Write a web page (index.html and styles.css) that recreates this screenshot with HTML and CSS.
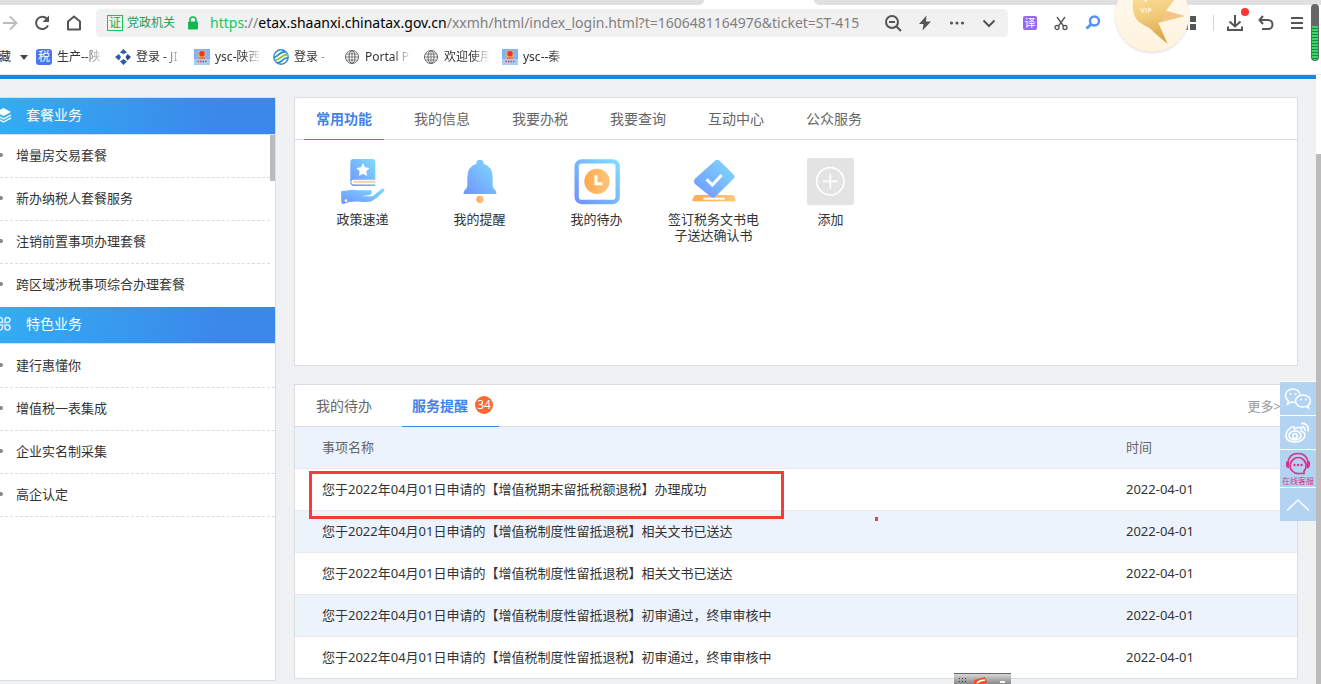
FILE: index.html
```html
<!DOCTYPE html>
<html lang="zh-CN">
<head>
<meta charset="utf-8">
<title>国家税务总局陕西省电子税务局</title>
<link rel="stylesheet" href="styles.css">
</head>
<body>
<svg class="defs" width="0" height="0" aria-hidden="true">
  <defs>
    <linearGradient id="blue" x1="0" y1="1" x2="1" y2="0"><stop offset="0" stop-color="#6f94ff"/><stop offset="1" stop-color="#80dcff"/></linearGradient>
    <linearGradient id="orange" x1="0" y1="0" x2="1" y2="0"><stop offset="0" stop-color="#ffa94d"/><stop offset="1" stop-color="#ffc67a"/></linearGradient>
    <linearGradient id="gold" gradientUnits="userSpaceOnUse" x1="90" y1="0" x2="120" y2="132"><stop offset="0" stop-color="#f8d98f"/><stop offset=".4" stop-color="#f0c978"/><stop offset="1" stop-color="#d5a045"/></linearGradient>
    <linearGradient id="cream" x1="0" y1="0" x2="0" y2="1"><stop offset="0" stop-color="#fffaf0"/><stop offset="1" stop-color="#fff3de"/></linearGradient>
    <symbol id="globe" viewBox="0 0 16 16"><g fill="none" stroke="#666"><circle cx="8" cy="8" r="6.500"/><ellipse cx="8" cy="8" rx="3" ry="6.500"/><path d="M8 1.500v13M1.500 8h13M2.500 5h11M2.500 11h11" stroke-width=".8"/></g></symbol>
    <symbol id="emblem" viewBox="0 0 16 16"><path fill="#84b2f4" d="M0 0h16v16H0z"/><path fill="#a9cbf8" d="M0 10h16v6H0z"/><path d="M4 9.500L8 .8l4 8.700z" fill="#f0b45c"/><circle cx="8" cy="5.500" r="4" fill="#f0b45c"/><circle cx="8" cy="4.800" r="2.800" fill="#e33a2c"/><path d="M5 9h6" stroke="#d8483c"/><path d="M3.500 12.500h9" stroke="#d8483c" stroke-width="1.300" stroke-dasharray="1.500 1"/></symbol>
  </defs>
</svg>

<header class="browser">
  <div class="tabstrip"><span class="strip-left"></span><span class="strip-right"></span></div>
  <div class="toolbar">
    <div class="nav">
      <button aria-label="前进"><svg width="20" height="20" viewBox="0 0 20 20"><path d="M3 10h13M10 3.500l6.500 6.500-6.500 6.500" fill="none" stroke="#bbb" stroke-width="1.800"/></svg></button>
      <button aria-label="刷新"><svg width="20" height="20" viewBox="0 0 20 20"><path d="M15 5.800A6.200 6.200 0 1 0 16 12.300" fill="none" stroke="#555" stroke-width="2"/><path d="M17 2.500v6.500h-6.500z" fill="#555"/></svg></button>
      <button aria-label="主页"><svg width="20" height="20" viewBox="0 0 20 20"><path d="M4 16.500V8.500L10 3.500l6 5v8z" fill="none" stroke="#555" stroke-width="2" stroke-linejoin="round"/></svg></button>
    </div>
    <div class="address">
      <span class="cert">证</span>
      <span class="org">党政机关</span>
      <svg class="lock" width="12" height="14" viewBox="0 0 12 14"><path d="M3 6V4a3 3 0 0 1 6 0v2" fill="none" stroke="#11b74f" stroke-width="1.600"/><rect x="1" y="5.500" width="10" height="8" rx="1" fill="#11b74f"/></svg>
      <div class="url" role="textbox" aria-label="地址"><span class="scheme">https</span>://<span class="host">etax.shaanxi.chinatax.gov.cn</span>/xxmh/html/index_login.html?t=1606481164976&amp;ticket=ST-415</div>
      <div class="tools">
        <button aria-label="缩小"><svg width="18" height="18" viewBox="0 0 18 18"><circle cx="8" cy="8" r="6" fill="none" stroke="#555" stroke-width="2"/><path d="M5 8h6M12.500 12.500L17 17" stroke="#555" stroke-width="2"/></svg></button>
        <button aria-label="极速模式"><svg width="18" height="18" viewBox="0 0 18 18"><path d="M10.500 1.500L3 10h4.500L6.500 16.500 15 7.500h-5z" fill="#555"/></svg></button>
        <button aria-label="更多"><svg width="18" height="18" viewBox="0 0 18 18"><g fill="#555"><circle cx="3.500" cy="9" r="1.600"/><circle cx="9" cy="9" r="1.600"/><circle cx="14.500" cy="9" r="1.600"/></g></svg></button>
        <button aria-label="展开"><svg width="18" height="18" viewBox="0 0 18 18"><path d="M3.500 6.500L9 12l5.500-5.500" fill="none" stroke="#555" stroke-width="2"/></svg></button>
      </div>
    </div>
    <div class="extensions">
      <button class="translate" aria-label="翻译">译</button>
      <button aria-label="截图"><svg width="16" height="16" viewBox="0 0 16 16"><g fill="none" stroke="#555" stroke-width="1.300"><path d="M4 2l6.500 9M12 2L5.500 11"/><circle cx="4" cy="12.500" r="2"/><circle cx="12" cy="12.500" r="2"/></g></svg></button>
      <button aria-label="搜索"><svg width="16" height="16" viewBox="0 0 16 16"><circle cx="9.500" cy="6" r="4.500" fill="none" stroke="#5590fa" stroke-width="2.400"/><path d="M6 9.500L1.500 13.500" stroke="#5590fa" stroke-width="3"/></svg></button>
      <button class="vip" aria-label="VIP"><svg width="74" height="52" viewBox="0 0 222 156"><circle cx="111" cy="45" r="111" fill="url(#cream)"/><path d="M54-4Q50 40 65 58C80 78 100 76 118 98L158 132L130 68L207 48L153 32L180-4H98L94 6 76-4Z" fill="url(#gold)"/><path d="M130 68L207 48 153 32C150 50 140 60 130 68Z" fill="#f6c583"/><text x="75" y="38">VIP</text></svg></button>
      <button class="apps" aria-label="应用"><svg width="14" height="14" viewBox="0 0 14 14"><path fill="#555" d="M0 0h5v6H0zM7 0h6v6H7zM0 8h5v6H0zM7 8h6v6H7z"/></svg></button>
      <span class="divider"></span>
      <button class="download" aria-label="下载"><svg width="18" height="18" viewBox="0 0 18 18"><path d="M9 1v11M3.500 7.500L9 12.500l5.500-5M2 12.500V16h14v-3.500" fill="none" stroke="#555" stroke-width="2"/></svg><i class="dot"></i></button>
      <button class="undo" aria-label="撤销"><svg width="16" height="16" viewBox="0 0 16 16"><path d="M5 1L1.500 5 5 9M2 5h8a4.500 4.500 0 0 1 0 9H4" fill="none" stroke="#555" stroke-width="2"/></svg></button>
      <button class="menu" aria-label="菜单"><svg width="14" height="14" viewBox="0 0 14 14"><path d="M1 2h12M1 7h12M1 12h12" stroke="#555" stroke-width="2"/></svg></button>
    </div>
  </div>
  <nav class="bookmarks">
    <button class="fav">藏<i class="caret"></i></button>
    <a href="#"><b class="tax">税</b><span>生产--陕</span></a>
    <a href="#"><svg width="16" height="16" viewBox="0 0 16 16"><g fill="#2d5fa8"><path d="M5 3.500L8.500 0 12 3.500 8.500 5zM5 12.500l3.500 3.500 3.500-3.500L8.500 10zM4 5l2 3-2 3.500L0 8z"/></g><path d="M12.500 5L16 8l-3.500 3.500L10.500 8z" fill="#244a86"/></svg><span>登录 - JI</span></a>
    <a href="#"><svg width="16" height="16"><use href="#emblem"/></svg><span>ysc-陕西</span></a>
    <a href="#" class="brief"><svg width="16" height="16" viewBox="0 0 16 16"><circle cx="8" cy="8" r="7.200" fill="#fff" stroke="#2f8bd0" stroke-width="1.400"/><g fill="none" stroke-width="1.800"><path d="M1 8C5 9 7 1 13 3" stroke="#2f8bd0"/><path d="M2 11C7 12 9 4 15 6" stroke="#8cc63f"/><path d="M4 14C9 14 10 8 15 9" stroke="#2f8bd0"/></g></svg><span>登录 -</span></a>
    <a href="#"><svg width="16" height="16"><use href="#globe"/></svg><span>Portal P</span></a>
    <a href="#"><svg width="16" height="16"><use href="#globe"/></svg><span>欢迎使用</span></a>
    <a href="#"><svg width="16" height="16"><use href="#emblem"/></svg><span>ysc--秦</span></a>
  </nav>
  <div class="meter"><span></span></div>
</header>

<div class="viewport">
<div class="page">
  <aside class="sidebar">
    <h2><svg width="16" height="16" viewBox="0 0 16 16"><path d="M7.500 1L15 5 7.500 9 0 5z" fill="#fff"/><path d="M0 8l7.500 4L15 8M0 11l7.500 4 7.500-4" fill="none" stroke="#dff0ff" stroke-width="1.500"/></svg>套餐业务</h2>
    <ul class="scroll">
      <li><a href="#">增量房交易套餐</a></li>
      <li><a href="#">新办纳税人套餐服务</a></li>
      <li><a href="#">注销前置事项办理套餐</a></li>
      <li><a href="#">跨区域涉税事项综合办理套餐</a></li>
    </ul>
    <h2><svg width="16" height="16" viewBox="0 0 16 16"><g fill="none" stroke="#d8eeff" stroke-width="1.500"><path d="M6.500 6.500H4a2.500 2.500 0 1 1 2.500-2.500zM9 6.500V4a2.500 2.500 0 1 1 2.500 2.500zM6.500 9v2.500a2.500 2.500 0 1 1-2.500-2.500zM9 9h2.500a2.500 2.500 0 1 1-2.500 2.500z"/></g></svg>特色业务</h2>
    <ul class="special">
      <li><a href="#">建行惠懂你</a></li>
      <li><a href="#">增值税一表集成</a></li>
      <li><a href="#">企业实名制采集</a></li>
      <li><a href="#">高企认定</a></li>
    </ul>
  </aside>

  <main>
    <section class="panel functions">
      <div class="tabs">
        <button class="active">常用功能</button><button>我的信息</button><button>我要办税</button><button>我要查询</button><button>互动中心</button><button>公众服务</button>
      </div>
      <div class="tiles">
        <a href="#"><svg width="48" height="48" viewBox="0 0 144 144"><path d="M44 6h57q8 0 8 8v56H44q-6 0-6 6t6 6h65v5H46q-12 0-12-12V16q0-10 10-10z" fill="url(#blue)"/><path d="M44 68h65v14H44q-7 0-7-7t7-7z" fill="#fff"/><path d="M46 71h63v7H46q-4 0-4-3.500t4-3.500z" fill="#ffd3a0"/><path d="M72 18l6 13 14 2-10 10 2 14-12-7-12 7 2-14-10-10 14-2z" fill="#fff"/><path d="M6 103l22-3q14-4 28 0h38q6 0 4 8l-3 5-28 5 34 0L128 95q10-3 8 6-18 20-38 32-10 3-24 2-20-3-42 0l-20 6q-5 0-5-7z" fill="url(#blue)"/><circle cx="21" cy="131" r="4" fill="#fff"/></svg><span>政策速递</span></a>
        <a href="#"><svg width="48" height="48" viewBox="0 0 144 144"><path d="M61 20q0-12 11-12t11 12q27 9 27 40v26q0 8 9 15 5 10-1 10H26q-6 0-1-10 9-7 9-15V60q0-31 27-40z" fill="url(#blue)"/><circle cx="72" cy="127" r="11" fill="url(#orange)"/></svg><span>我的提醒</span></a>
        <a href="#"><svg width="48" height="48" viewBox="0 0 144 144"><rect x="11" y="13" width="123" height="122" rx="15" fill="#fff" stroke="url(#blue)" stroke-width="13"/><circle cx="72" cy="73" r="38" fill="url(#orange)"/><path d="M69 55v25h19" fill="none" stroke="#fff" stroke-width="9"/></svg><span>我的待办</span></a>
        <a href="#"><svg width="48" height="48" viewBox="0 0 144 144"><path d="M18 114h108q5 0 7 6l4 9q0 4-5 4H11q-5 0-4-4l4-9q2-6 7-6z" fill="url(#orange)"/><path d="M40 125h64" stroke="#fff" stroke-width="6"/><path d="M75 11q7-6 14 0l41 41q7 7 0 14L76 119q-7 5-14 0L14 80q-5-7 0-14z" fill="url(#blue)"/><path d="M50 67l17 17 28-30" fill="none" stroke="#fff" stroke-width="9"/></svg><span>签订税务文书电子送达确认书</span></a>
        <a href="#"><svg width="48" height="48" viewBox="0 0 144 144"><rect x="0" y="3" width="141" height="141" rx="6" fill="#e3e3e3"/><g fill="none" stroke="#fff" stroke-width="5"><circle cx="70" cy="73" r="41"/><path d="M48 73h44M70 51v44"/></g></svg><span>添加</span></a>
      </div>
    </section>

    <section class="panel notices">
      <div class="tabs">
        <button>我的待办</button><button class="active counted">服务提醒<em>34</em></button>
        <a class="more" href="#">更多&gt;</a>
      </div>
      <table>
        <thead><tr><th>事项名称</th><th class="date">时间</th></tr></thead>
        <tbody>
          <tr><td>您于2022年04月01日申请的【增值税期末留抵税额退税】办理成功</td><td>2022-04-01</td></tr>
          <tr><td>您于2022年04月01日申请的【增值税制度性留抵退税】相关文书已送达</td><td>2022-04-01</td></tr>
          <tr><td>您于2022年04月01日申请的【增值税制度性留抵退税】相关文书已送达</td><td>2022-04-01</td></tr>
          <tr><td>您于2022年04月01日申请的【增值税制度性留抵退税】初审通过，终审审核中</td><td>2022-04-01</td></tr>
          <tr><td>您于2022年04月01日申请的【增值税制度性留抵退税】初审通过，终审审核中</td><td>2022-04-01</td></tr>
        </tbody>
      </table>
      <div class="highlight"></div>
      <div class="speck"></div>
    </section>
  </main>

  <div class="floating">
    <button aria-label="微信"><svg width="28" height="24" viewBox="0 0 28 24"><g fill="none" stroke="#fff" stroke-width="1.500"><path d="M16 7.500C15 3.500 12 2 9 2 4.500 2 1.500 5 1.500 8.500c0 2 1 4 3 5.500l-1 3 3.500-2q2 .6 4.500.4"/><path d="M19 8c-4 0-7.500 2.500-7.500 6s3.500 6 7.500 6q1.500 0 3-.6l2.500 1.600-.6-2.500c1.600-1.200 2.600-2.700 2.600-4.500 0-3.500-3.500-6-7.500-6z"/></g><g fill="#fff"><circle cx="6.500" cy="7" r="1"/><circle cx="11.500" cy="7" r="1"/><circle cx="17" cy="12.500" r="1"/><circle cx="22" cy="12.500" r="1"/></g></svg></button>
    <button aria-label="微博"><svg width="28" height="24" viewBox="0 0 28 24"><g fill="none" stroke="#fff" stroke-width="1.600"><path d="M17 10q1.500-4-2.500-3.500-2 .2-4 1.500.5-3-2.500-2C5 7 2 11.500 2 15c0 4 4.500 6 9 6 6 0 10-3.500 10-7 0-2-1.500-3-4-4z"/><ellipse cx="11" cy="14.500" rx="6" ry="4.500"/><circle cx="11" cy="15" r="2.200"/><path d="M17 2.500c5-1 8.500 3 7 8M17.500 6c2.500-.5 4 1.500 3.500 4"/></g></svg></button>
    <button class="service"><svg width="28" height="24" viewBox="0 0 28 24"><g fill="none" stroke="#d6338a" stroke-width="1.700"><path d="M4 10C5 4 9 1.500 14 1.500S23 4 24 10"/><path d="M20 19a8 8 0 1 0-5 2.500h5z"/></g><path d="M2 9.500h3v7Q2 16 2 13zM26 9.500h-3v7q3-.5 3-3.500z" fill="#d6338a"/><g fill="#d6338a"><circle cx="10.500" cy="13" r="1.200"/><circle cx="14" cy="13" r="1.200"/><circle cx="17.500" cy="13" r="1.200"/></g></svg><span>在线客服</span></button>
    <button aria-label="返回顶部"><svg width="28" height="24" viewBox="0 0 28 24"><path d="M3 17.500L14 7l11 10.500" fill="none" stroke="#fff" stroke-width="1.500"/></svg></button>
  </div>
</div>
<div class="scrollbar"><span></span></div>
</div>

<div class="ime"><svg width="57" height="10" viewBox="0 0 57 10"><g fill="#333"><path d="M5 4h1v1H5zM8 4h1v1H8zM11 4h1v1h-1zM5 7h1v1H5zM8 7h1v1H8zM11 7h1v1h-1z"/></g><path d="M20 6l11-3 2 5-4 2h-9z" fill="#f5501e"/><path d="M23 9q3-3 8-3" fill="none" stroke="#fff" stroke-width="1.500"/><path d="M46 7h5v2h-5z" fill="#fff"/></svg></div>
</body>
</html>
```

FILE: styles.css
```css
* { box-sizing: border-box; }
body {
  margin: 0;
  height: 100vh;
  overflow: hidden;
  position: relative;
  display: flex;
  flex-direction: column;
  background: #fff;
  font: 13px/16px "Noto Sans", "Noto Sans CJK SC", sans-serif;
  color: #333;
}
button { margin: 0; padding: 0; border: 0; background: none; font: inherit; color: inherit; display: flex; align-items: center; justify-content: center; }
a { color: inherit; text-decoration: none; }
svg { display: block; flex: none; }
i, em, b { font-style: normal; font-weight: 400; }
.defs { position: absolute; }

/* Browser chrome */
.browser { position: relative; flex: none; height: 75px; border-bottom: 1px solid #e6e6e8; background: #fff; }
.tabstrip { display: flex; justify-content: space-between; height: 5px; }
.tabstrip span { background: #e0e0e0; }
.strip-left { width: 704px; border-bottom-right-radius: 5px; }
.strip-right { width: calc(100% - 814px); border-bottom-left-radius: 5px; }
.toolbar { display: flex; align-items: center; height: 36px; }
.nav { display: flex; gap: 12px; width: 96px; flex: none; }
.address { flex: 1; min-width: 0; display: flex; align-items: center; height: 28px; padding-left: 11px; background: #f1f1f1; border-radius: 5px; }
.cert { width: 16px; height: 16px; border: 1px solid #14c558; color: #12b04e; font-size: 12px; line-height: 14px; text-align: center; }
.org { margin-left: 4px; font-size: 12px; color: #2a9a55; flex: none; }
.lock { margin: 0 11px 0 12px; }
.url { flex: 1; min-width: 0; overflow: hidden; white-space: nowrap; font-size: 14px; line-height: 22px; color: #808080; }
.scheme { color: #1cc45c; }
.host { color: #000; }
.tools { display: flex; gap: 14px; padding: 0 10px 0 12px; }
.extensions { position: relative; display: flex; align-items: center; width: 313px; flex: none; padding-left: 15px; gap: 16px; }
.translate { width: 14px; height: 14px; border-radius: 2px; background: #9668f8; color: #fff; font-size: 11px; line-height: 14px; }
.vip { position: absolute; left: 107px; top: -14px; filter: drop-shadow(0 1px 1px #ddd); }
.vip text { font: 700 22px "Open Sans", sans-serif; fill: #fdf1d8; }
.apps { margin-left: 66px; }
.divider { width: 1px; height: 16px; background: #d5d5d5; }
.download { position: relative; margin-left: -4px; }
.dot { position: absolute; right: -5px; top: -6px; width: 8px; height: 8px; border-radius: 50%; background: #f83434; }
.undo { margin-left: -2px; }
.meter { position: absolute; right: 2px; top: 4px; width: 8px; height: 57px; padding: 22px 1px 1px; border-radius: 4px; background: #666; }
.meter span { display: block; height: 100%; border-radius: 0 0 3px 3px; background: repeating-linear-gradient(#38d66b 0 2px, #178a3c 2px 3px); }
.bookmarks { display: flex; align-items: center; gap: 12px; height: 32px; font-size: 12px; line-height: 18px; }
.bookmarks a { display: flex; align-items: center; gap: 5px; }
.bookmarks a span { width: 46px; white-space: nowrap; -webkit-mask-image: linear-gradient(to left, transparent, #000 18px); mask-image: linear-gradient(to left, transparent, #000 18px); }
.bookmarks .brief span { width: 38px; }
.fav { width: 28px; margin-right: -4px; justify-content: flex-end; gap: 9px; }
.caret { border: 4px solid transparent; border-top: 5px solid #444; border-bottom: 0; }
.tax { width: 16px; height: 16px; border-radius: 3px; background: #4a74f5; color: #fff; font-size: 12px; line-height: 16px; text-align: center; }

/* Portal page */
.viewport { flex: 1; min-height: 0; display: flex; }
.page { position: relative; flex: 1; min-width: 0; display: flex; align-items: flex-start; gap: 18px; padding: 18px 18px 0 0; border-top: 4px solid #1e86dc; background: #f0f1f3; }
.scrollbar { width: 5px; flex: none; padding-top: 79px; display: flex; background: #fff; }
.scrollbar span { width: 5px; background: #bbb; }

.sidebar { width: 276px; min-height: 584px; flex: none; border: 1px solid #dcdde0; border-left: 0; background: #fff; }
.sidebar h2 { display: flex; align-items: center; gap: 14px; height: 37px; margin: 0; padding: 0 8px 2px 0; border-bottom: 1px solid #d5e0ee; background: linear-gradient(100deg, #33adf3, #3c87ea 80%); color: #fff; font-size: 14px; font-weight: 400; }
.sidebar h2 svg { margin-left: -4px; }
.sidebar ul { margin: 0; padding: 0; list-style: none; }
.sidebar li { height: 43px; display: flex; align-items: center; gap: 13px; padding-bottom: 2px; border-bottom: 1px dashed #dcdcdc; }
.sidebar li::before { content: ""; width: 3px; height: 4px; border-radius: 0 2px 2px 0; background: #888; }
.sidebar .scroll { padding-right: 5px; background: linear-gradient(#bbb, #bbb) right top / 5px 46px no-repeat; }
.sidebar .scroll li:last-child { border-bottom-color: transparent; }
.sidebar .special { padding-top: 1px; }

main { flex: 1; min-width: 0; display: flex; flex-direction: column; gap: 18px; }
.panel { position: relative; border: 1px solid #dcdde0; background: #fff; }
.tabs { display: flex; align-items: stretch; gap: 18px; height: 42px; padding: 0 18px 0 9px; border-bottom: 1px solid #dcdde0; font-size: 14px; color: #666; }
.tabs button { position: relative; padding: 0 12px; margin-bottom: -1px; border-bottom: 1px solid transparent; }
.tabs .active { color: #4481eb; font-weight: 700; border-bottom-color: #4481eb; }
.tabs .counted { padding: 0 6px 0 10px; gap: 7px; }
.counted em { width: 18px; height: 18px; margin-bottom: 2px; border-radius: 50%; background: #ff6633; color: #fff; font-size: 12px; font-weight: 400; line-height: 18px; text-align: center; }
.more { margin-left: auto; margin-right: -2px; align-self: center; color: #999; font-size: 13px; }
.functions { min-height: 269px; }
.tiles { display: flex; padding: 17px 9px 0; }
.tiles a { width: 117px; display: flex; flex-direction: column; align-items: center; gap: 6px; }
.tiles span { width: 92px; text-align: center; }

table { width: 100%; border-collapse: collapse; table-layout: fixed; text-align: left; }
th, td { height: 42px; padding: 0 0 0 27px; border-bottom: 1px solid #e8eaed; font-weight: 400; white-space: nowrap; }
th { height: 41px; color: #666; }
.date { width: 171px; }
th:last-child, td:last-child { padding-left: 0; }
thead tr, tbody tr:nth-child(even) { background: #ecf3fc; }
.notices tbody tr:last-child td { border-bottom: 0; }

.highlight { position: absolute; left: 14px; top: 86px; width: 475px; height: 48px; border: 3px solid #f93a3a; }
.speck { position: absolute; left: 580px; top: 132px; width: 3px; height: 4px; background: #f93a3a; }

.floating { position: absolute; right: 0; top: 302px; width: 36px; display: flex; flex-direction: column; gap: 1px; border-top: 1px solid #fff; background: #fff; }
.floating button { height: 33px; background: #b3d3f2; }
.floating .service { height: 37px; flex-direction: column; color: #d6338a; font-size: 8px; line-height: 10px; }

.ime { position: absolute; left: 954px; bottom: 0; width: 57px; height: 11px; border-top: 1px solid #666; background: linear-gradient(#d8d8d8, #888); }
```
